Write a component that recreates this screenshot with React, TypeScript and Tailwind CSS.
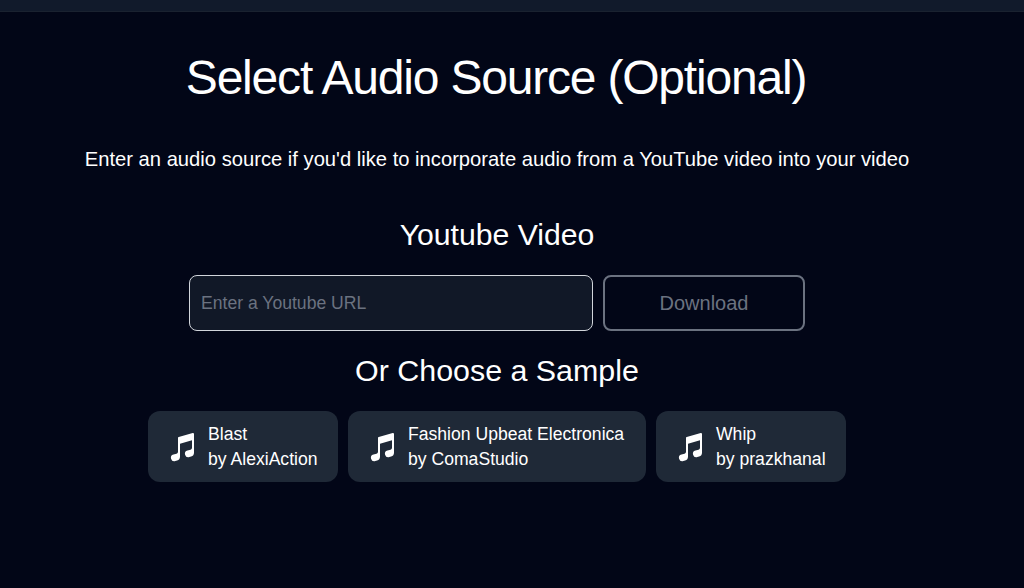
import React from 'react';
import { HiMusicalNote } from 'react-icons/hi2';

const samples = [
  { title: 'Blast', author: 'by AlexiAction', width: 190 },
  { title: 'Fashion Upbeat Electronica', author: 'by ComaStudio', width: 298 },
  { title: 'Whip', author: 'by prazkhanal', width: 190 },
];

const SampleCard = ({ title, author, width }: { title: string; author: string; width: number }) => (
  <button
    style={{ width }}
    className="flex h-[71px] items-center gap-[9px] rounded-xl bg-[#1f2937] pl-[19px] text-left text-white"
  >
    <HiMusicalNote className="h-8 w-8 text-white" />
    <div className="text-[17.6px] leading-[25px]">
      <div>{title}</div>
      <div>{author}</div>
    </div>
  </button>
);

export default function App() {
  return (
    <div className="min-h-[588px] bg-[#020617] font-['Liberation_Sans',Arial,sans-serif] text-white">
      <div className="h-[12px] border-b border-[#1a2230] bg-[#111a2b]" />

      <div className="flex w-[994px] flex-col items-center">
        <h1 className="mt-[37px] pr-[2px] text-[48px] leading-[58px] tracking-tight">Select Audio Source (Optional)</h1>
        <p className="mt-[38px] text-[20.2px] leading-[28px]">
          Enter an audio source if you'd like to incorporate audio from a YouTube video into your video
        </p>

        <h2 className="mt-[44px] text-[30.2px] leading-[36px]">Youtube Video</h2>
        <div className="mt-[22px] flex gap-[10px]">
          <input
            placeholder="Enter a Youtube URL"
            className="h-[56px] w-[404px] rounded-lg border border-[#d1d5db] bg-[#111827] px-[11px] text-[17.6px] text-white outline-none placeholder:text-[#6b7280]"
          />
          <button className="h-[56px] w-[202px] rounded-lg border-2 border-[#6b7280] text-[20px] text-[#6b7280]">
            Download
          </button>
        </div>

        <h2 className="mt-[21px] text-[30.4px] leading-[36px]">Or Choose a Sample</h2>
        <div className="mt-[23px] flex gap-[10px]">
          {samples.map((s) => (
            <SampleCard key={s.title} title={s.title} author={s.author} width={s.width} />
          ))}
        </div>
      </div>
    </div>
  );
}
